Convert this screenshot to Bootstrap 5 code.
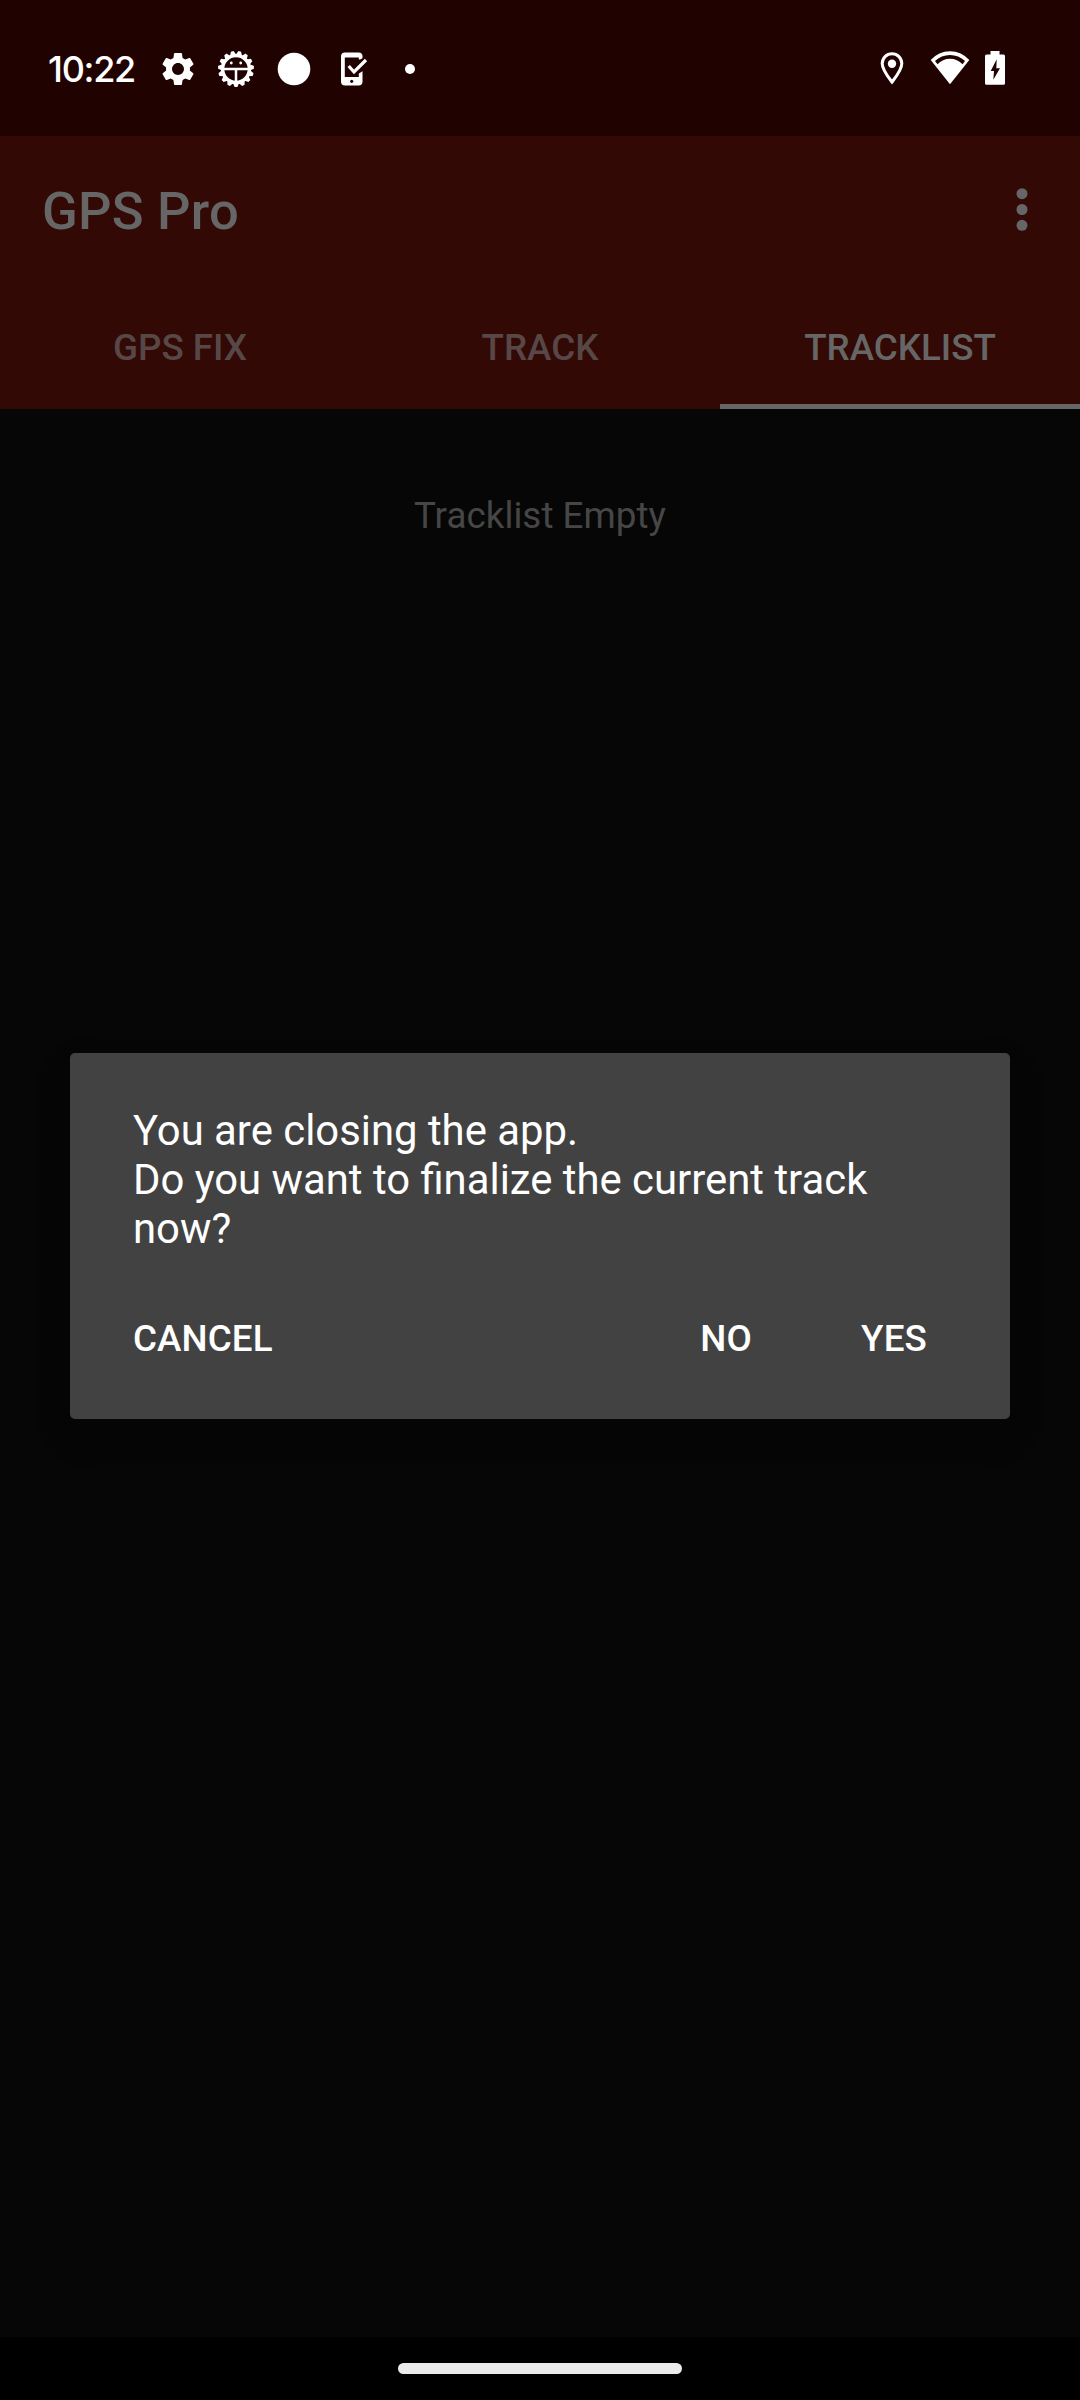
<!DOCTYPE html>
<html lang="en">
<head>
<meta charset="utf-8">
<meta name="viewport" content="width=device-width, initial-scale=1">
<title>GPS Pro</title>
<link href="https://cdn.jsdelivr.net/npm/bootstrap@5.3.0/dist/css/bootstrap.min.css" rel="stylesheet">
<style>
  body { font-family: Roboto, sans-serif; background: #060606; line-height: 1.172; }
  .screen { width: 1080px; height: 2400px; overflow: hidden; }
  .status-bar { height: 136px; background: #200300; color: #fff; padding: 2px 72px 0 48px; }
  .status-bar svg { display: block; flex: none; }
  .clock { font: 500 36px/44px Inter, sans-serif; letter-spacing: -1.3px; width: 101px; white-space: nowrap; }
  .app-header { background: #320905; height: 273px; color: #666; }
  .app-bar { height: 147px; padding: 3px 33px 0 42px; }
  .app-title { font-size: 52.5px; line-height: 62px; font-weight: 500; letter-spacing: .25px; }
  .app-tabs { height: 126px; }
  .app-tabs .nav-link { height: 126px; padding: 7px 0 0; border-bottom: 5px solid transparent; font-size: 36.75px; line-height: 43px; font-weight: 500; color: #574747; display: flex; align-items: center; justify-content: center; }
  .app-tabs .nav-link.active { color: #666; border-color: #666; }
  .empty-note { padding-top: 85px; font-size: 36.75px; line-height: 43px; letter-spacing: .05px; color: #464646; }
  .nav-bar { height: 63px; background: #000; }
  .home-pill { width: 284px; height: 11px; background: #ebebeb; }
  .dialog-layer { position: absolute; top: 136px; right: 0; bottom: 64px; left: 0; }
  .dialog-box { width: 940px; height: 366px; background: #424242; color: #fff; border: 0; border-radius: 5px; box-shadow: 0 16px 40px rgba(0,0,0,.12); }
  .dialog-text { font-size: 41.85px; line-height: 49px; padding: 53px 63px 0; margin: 0; }
  .dialog-actions { padding: 22px 32px 0 31px; }
  .dialog-actions .btn { font-size: 36.75px; line-height: 43px; font-weight: 500; letter-spacing: .1px; color: #fff; border: 0; height: 126px; min-width: 168px; padding: 0 32px; }
</style>
</head>
<body>
<div class="screen position-relative d-flex flex-column">
  <div class="status-bar d-flex align-items-center">
    <div class="clock">10:22</div>
    <svg width="58" height="58" viewBox="-29 -29 58 58"><path transform="scale(1.66) translate(-12 -12)" fill="#fff" d="M19.14 12.94c.04-.3.06-.61.06-.94 0-.32-.02-.64-.07-.94l2.03-1.58c.18-.14.23-.41.12-.61l-1.92-3.32c-.12-.22-.37-.29-.59-.22l-2.39.96c-.5-.38-1.03-.7-1.62-.94l-.36-2.54c-.04-.24-.24-.41-.48-.41h-3.84c-.24 0-.43.17-.47.41l-.36 2.54c-.59.24-1.13.57-1.62.94l-2.39-.96c-.22-.08-.47 0-.59.22L2.74 8.87c-.12.21-.08.47.12.61l2.03 1.58c-.05.3-.09.63-.09.94s.02.64.07.94l-2.03 1.58c-.18.14-.23.41-.12.61l1.92 3.32c.12.22.37.29.59.22l2.39-.96c.5.38 1.03.7 1.62.94l.36 2.54c.05.24.24.41.48.41h3.84c.24 0 .44-.17.47-.41l.36-2.54c.59-.24 1.13-.56 1.62-.94l2.39.96c.22.08.47 0 .59-.22l1.92-3.32c.12-.22.07-.47-.12-.61l-2.01-1.58zM12 15.6c-1.98 0-3.6-1.62-3.6-3.6s1.62-3.6 3.6-3.6 3.6 1.62 3.6 3.6-1.62 3.6-3.6 3.6z"/></svg>
    <svg width="58" height="58" viewBox="-29 -29 58 58" fill="none" stroke="#fff">
      <defs>
        <path id="tooth" d="M-3.3 13.5L-1.4 18H1.4L3.3 13.5Z" fill="#fff" stroke="none"/>
        <g id="teeth"><use href="#tooth"/><use href="#tooth" transform="rotate(24)"/><use href="#tooth" transform="rotate(48)"/><use href="#tooth" transform="rotate(72)"/><use href="#tooth" transform="rotate(96)"/></g>
      </defs>
      <use href="#teeth"/><use href="#teeth" transform="rotate(120)"/><use href="#teeth" transform="rotate(240)"/>
      <circle r="13.4" stroke-width="3.4"/>
      <path d="M-13 0H13M0 0V13" stroke-width="2.5"/>
      <g fill="#fff" stroke="none"><circle cx="-4.7" cy="-6" r="1.4"/><circle cx="4.7" cy="-6" r="1.4"/></g>
    </svg>
    <svg width="58" height="58" viewBox="-29 -29 58 58"><circle r="16.3" fill="#fff"/></svg>
    <svg width="58" height="58" viewBox="-29 -29 58 58">
      <rect x="-11" y="-16.5" width="21.5" height="33" rx="4" fill="#fff"/>
      <rect x="-7.2" y="-11.5" width="14" height="19.5" fill="#200300"/>
      <path d="M6 -9.5H8L11 -11V2L6 5z" fill="#200300"/>
      <circle cx="-.3" cy="12.3" r="1.6" fill="#200300"/>
      <path d="M-3.3 -3L2 3L14 -9" fill="none" stroke="#fff" stroke-width="3.2"/>
    </svg>
    <svg width="58" height="58" viewBox="-29 -29 58 58"><circle r="5" fill="#fff"/></svg>
    <div class="ms-auto d-flex">
      <svg width="58" height="58" viewBox="-29 -29 58 58"><path d="M0 13C-3 9 -9.8 1 -9.8 -5.5A9.8 9.8 0 0 1 9.8 -5.5C9.8 1 3 9 0 13Z" fill="none" stroke="#fff" stroke-width="3"/><circle cy="-5.3" r="4.2" fill="#fff"/></svg>
      <svg width="58" height="58" viewBox="-29 -29 58 58"><path d="M-19.3 -9A25.5 25.5 0 0 1 19.3 -9L0 15.3Z" fill="#fff"/><path d="M-15 -8A21.7 21.7 0 0 1 15 -8L12.5 -4.7A16.7 16.7 0 0 0 -12.5 -4.7Z" fill="#200300"/></svg>
      <svg width="29" height="58" viewBox="-13 -29 29 58"><path d="M-4.5 -14.5V-18H4.5V-14.5H8.5Q10 -14.5 10 -13V14.2Q10 15.7 8.5 15.7H-8.5Q-10 15.7 -10 14.2V-13Q-10 -14.5 -8.5 -14.5Z" fill="#fff" transform="translate(3 0)"/><path d="M1.7 -9.7L-4.3 2H-1L-1.7 10.7L5 -.7H1.3Z" fill="#200300" transform="translate(3 0)"/></svg>
    </div>
  </div>

  <header class="app-header">
    <div class="app-bar d-flex align-items-center justify-content-between">
      <div class="app-title">GPS Pro</div>
      <svg width="50" height="50" viewBox="-25 -25 50 50" fill="#666"><circle cy="-17.3" r="5.5"/><circle cy="-1.5" r="5.5"/><circle cy="14.3" r="5.5"/></svg>
    </div>
    <nav class="nav nav-fill app-tabs row g-0">
      <a class="nav-link col-4">GPS FIX</a>
      <a class="nav-link col-4">TRACK</a>
      <a class="nav-link col-4 active">TRACKLIST</a>
    </nav>
  </header>

  <main class="flex-grow-1">
    <div class="empty-note text-center">Tracklist Empty</div>
  </main>

  <div class="nav-bar d-flex align-items-center justify-content-center">
    <div class="home-pill rounded-pill"></div>
  </div>

  <div class="dialog-layer d-flex align-items-center justify-content-center">
    <div class="card dialog-box">
      <p class="dialog-text">You are closing the app.<br>Do you want to finalize the current track now?</p>
      <div class="dialog-actions d-flex">
        <button type="button" class="btn me-auto">CANCEL</button>
        <button type="button" class="btn">NO</button>
        <button type="button" class="btn">YES</button>
      </div>
    </div>
  </div>
</div>
<script src="https://cdn.jsdelivr.net/npm/bootstrap@5.3.0/dist/js/bootstrap.bundle.min.js"></script>
</body>
</html>
